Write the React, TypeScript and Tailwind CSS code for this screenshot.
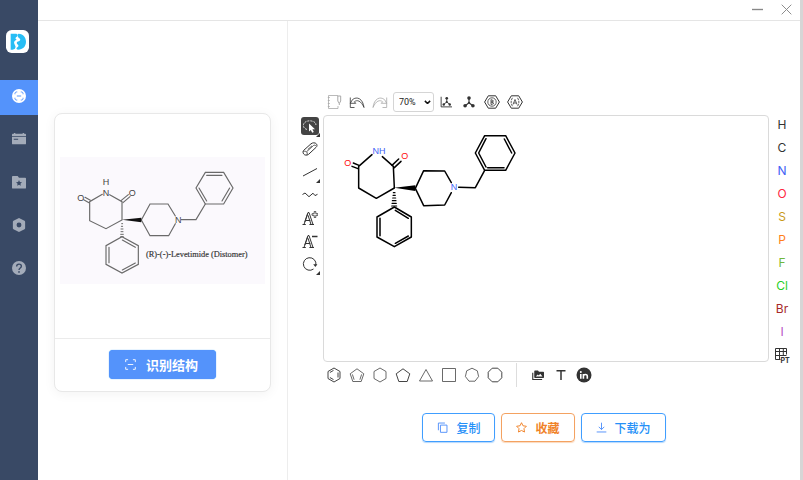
import { useState, type ReactNode } from "react";

const ATOMS = [
  { symbol: "H", color: "text-[#333333]" },
  { symbol: "C", color: "text-[#333333]" },
  { symbol: "N", color: "text-[#4262f5]" },
  { symbol: "O", color: "text-[#ff2640]" },
  { symbol: "S", color: "text-[#c99a19]" },
  { symbol: "P", color: "text-[#ff8019]" },
  { symbol: "F", color: "text-[#70b83c]" },
  { symbol: "Cl", color: "text-[#1fd01f]" },
  { symbol: "Br", color: "text-[#a62929]" },
  { symbol: "I", color: "text-[#b94cc4]" },
];

type IconProps = { children: ReactNode; size?: string; className?: string };

// 16x16 line icon, strokes follow the text colour
function Icon({ children, size = "size-4", className = "" }: IconProps) {
  return (
    <svg
      viewBox="0 0 16 16"
      className={`${size} ${className} shrink-0`}
      fill="none"
      stroke="currentColor"
      strokeWidth="0.8"
      aria-hidden="true"
    >
      {children}
    </svg>
  );
}

const NAV_ITEMS = [
  {
    label: "识别",
    icon: (
      <>
        <circle cx="8" cy="8" r="8" fill="#fff" stroke="none" />
        <path
          d="M3.4 6V5C3.4 4.1 4.1 3.4 5 3.4H6M10 3.4h1c.9 0 1.600.7 1.600 1.600v1M12.600 10v1c0 .9-.7 1.600-1.600 1.600h-1M6 12.600h-1c-.9 0-1.600-.7-1.600-1.600v-1M5.500 8h5"
          stroke="#5493fb"
          strokeWidth="1.100"
        />
      </>
    ),
  },
  {
    label: "记录",
    icon: (
      <g stroke="none" fill="currentColor">
        <path d="M2.200 1h1.600v1h8.400V1h1.600v1H15a1 1 0 0 1 1 1v1.800H0V3a1 1 0 0 1 1-1h1.200z" />
        <path d="M0 5.800h16v7.200a1 1 0 0 1-1 1H1a1 1 0 0 1-1-1zM2 7.600v1.200h5V7.600z" fillRule="evenodd" />
      </g>
    ),
  },
  {
    label: "收藏夹",
    icon: (
      <path
        d="M1 1h5.500l1.500 2h7a1 1 0 0 1 1 1v10.500a1 1 0 0 1-1 1H1a1 1 0 0 1-1-1V2a1 1 0 0 1 1-1zm7 4.800-1 2.200-2.400.3 1.800 1.600-.5 2.400L8 11.100l2.100 1.200-.5-2.400 1.800-1.600L9 8z"
        fill="currentColor"
        fillRule="evenodd"
        stroke="none"
      />
    ),
  },
  {
    label: "设置",
    icon: (
      <path
        d="M8 0l6.300 3.200c.5.300.7.700.7 1.200v7.200c0 .5-.2.900-.7 1.200L8 16l-6.300-3.200c-.5-.3-.7-.7-.7-1.200V4.400c0-.5.2-.9.700-1.200zM8 5.200a2.800 2.800 0 1 0 0 5.600 2.800 2.800 0 0 0 0-5.600z"
        fill="currentColor"
        fillRule="evenodd"
        stroke="none"
      />
    ),
  },
  {
    label: "帮助",
    icon: (
      <>
        <circle cx="8" cy="8" r="8" fill="currentColor" stroke="none" />
        <path d="M5.300 6.300C5.300 4.700 6.400 3.600 8 3.600s2.700 1 2.700 2.400c0 1.900-2.700 2-2.700 4.200" stroke="#394965" strokeWidth="1.600" />
        <circle cx="8" cy="12.500" r="1" fill="#394965" stroke="none" />
      </>
    ),
  },
];

const MORE_MARK = (
  <svg viewBox="0 0 4 4" className="absolute -right-px -bottom-[2px] size-1" aria-hidden="true">
    <path d="M4 0v4H0z" fill="#333" />
  </svg>
);

const LETTER_A = (
  <path d="M.5 14.500h3.300M7.400 14.500H12M2 14.500 6 2.500h1L11 14.500M9 14.500 6 5.200M3.300 10.500h5M2.800 12 5.700 3.500" strokeWidth="1" />
);

const TOOLS = [
  {
    label: "Eraser",
    icon: (
      <>
        <path d="M1.500 9.500 9 2.800c1.500-1.300 4.300-1.300 5.300 0 1 1.200.9 2.500-.3 3.600l-7.500 7c-1.300 1.100-3.900 1-4.800-.4-.7-1.100-1-2.400-.2-3.500z" strokeWidth="1" />
        <path d="M4.500 10.800 11.500 4.500c.7-.6 2-.3 2.500.4M4.500 10.800c-1.400-.8-2.400-.8-3.200-.2M4.500 10.800c.8.600 1 1.600.5 3.200M5.800 8.500 10 4.800" />
      </>
    ),
  },
  { label: "Bond", more: true, icon: <path d="M1 12 15 4.500" strokeWidth="1" /> },
  { label: "Chain", icon: <path d="M.5 7.500 3 6l4 3.700L11 6.200l2 2.400 2.500-1.300" strokeWidth="1" /> },
  {
    label: "Charge Plus",
    icon: (
      <>
        {LETTER_A}
        <path d="M12.200 1.500h1.600v2.200H16v1.600h-2.200v2.200h-1.600V5.300H10V3.700h2.200z" />
      </>
    ),
  },
  {
    label: "Charge Minus",
    icon: (
      <>
        {LETTER_A}
        <path d="M10 3.500h5.500" strokeWidth="1.500" />
      </>
    ),
  },
  {
    label: "Rotate",
    more: true,
    icon: (
      <>
        <path d="M11.500 13A6.300 6.300 0 1 1 13.900 9" strokeWidth="1" />
        <path d="M11.200 8.200h4.200L13.400 11z" fill="currentColor" stroke="none" />
      </>
    ),
  },
];

const TEMPLATES = [
  {
    label: "Benzene",
    icon: <path d="M8 1l6 3.500v7L8 15l-6-3.500v-7zM7.500 3.400 3.900 5.500M3.900 10.500l3.600 2.100M12 5.500v5" strokeWidth="1" />,
  },
  {
    label: "Cyclopentadiene",
    icon: <path d="M8 1.800l6.800 5L12.200 14.500H3.800L1.200 6.800zM3.400 7.400l1.700 5.300M12.600 7.400l-1.700 5.300" />,
  },
  { label: "Cyclohexane", icon: <path d="M8 1l6 3.500v7L8 15l-6-3.500v-7z" /> },
  { label: "Cyclopentane", icon: <path d="M8 1.800l6.800 5L12.200 14.500H3.800L1.200 6.800z" strokeWidth="1" /> },
  { label: "Cyclopropane", icon: <path d="M8 2.500 14.500 14H1.500z" /> },
  { label: "Cyclobutane", icon: <path d="M1.500 1.500h13v13h-13z" /> },
  { label: "Cycloheptane", icon: <path d="M8 1.200l5.300 2.600 1.300 5.700-3.600 4.700H5L1.400 9.500l1.300-5.700z" /> },
  { label: "Cyclooctane", icon: <path d="M5.200 1.200h5.600l4 4v5.600l-4 4H5.200l-4-4V5.200z" strokeWidth="1" /> },
];

const HEXAGON = <path d="M4.300 1.800h7.400L15.400 8l-3.700 6.200H4.300L.6 8z" strokeWidth="1" />;

function ToolButton({ label, disabled, children }: { label: string; disabled?: boolean; children: ReactNode }) {
  return (
    <button
      type="button"
      aria-label={label}
      disabled={disabled}
      className="flex w-[22px] items-center justify-center text-[#333333] disabled:text-[#a8a8a8]"
    >
      {children}
    </button>
  );
}

function Sidebar() {
  return (
    <nav className="flex w-[38px] shrink-0 flex-col bg-[#394965]">
      <div className="flex h-20 items-center justify-center pt-[3px] pr-[3px]">
        <svg viewBox="0 0 69 69" className="size-[23px]" role="img" aria-label="logo">
          <rect width="69" height="69" rx="17" fill="#fff" />
          <path d="M14 11h15c7 0 7 7 2 10-4 3-3 6 1 8-7 2-9 7-7 12 2 6 5 7 3 12-1 4-5 6-14 6z" fill="#27bdf5" />
          <path d="M38 11c14 1 22 11 22 24S51 59 36 59c-6 0-6-6-1-8 5-3 1-7-2-9-2-5 1-8 6-8 5-2 5-7 1-9-5-4-8-13-2-14z" fill="#27bdf5" />
        </svg>
      </div>
      <div className="flex flex-col gap-2">
        {NAV_ITEMS.map((item, idx) => (
          <a
            key={item.label}
            href="#"
            aria-label={item.label}
            className={
              idx === 0
                ? "flex h-[35px] items-center justify-center bg-[#5493fb] pb-[3px] text-white"
                : "flex h-[35px] items-center justify-center pb-[3px] text-[#a3abb9]"
            }
          >
            <Icon size="size-[14px]">{item.icon}</Icon>
          </a>
        ))}
      </div>
    </nav>
  );
}

function SourceImage() {
  return (
    <svg viewBox="30 155 615 382" className="w-full bg-[#fbf9fd]" role="img" aria-label="Levetimide">
      <g fill="none" stroke="#6a6a6a" strokeWidth="3.500" strokeLinecap="round">
        <path d="M157 267 119 289V346L168 370 216 344V289L179 268" />
        <path d="M117 292 101 283M121 285 105 276M213 286 235 268M219 292 240 274" />
        <path d="M274 344 300 296H354L376 332M376 355 356 391H300L274 344M394 343H438L466 296" />
        <path d="M466 296 438 248 466 201H521L549 248 521 296zM470 287 447 248M470 210H516M539 248 516 287" />
        <path d="M216 394 265 421V477L216 503 168 477V421zM217 404 256 426M256 473 217 494M177 426V472" />
        <path d="M212 394h8M212 387h8M213 379h6M213 371h6M214 363h4M215 355h3" strokeWidth="3" />
      </g>
      <path d="M216 343 274 337V351z" fill="#111" />
      <g fill="#444" fontSize="27" textAnchor="middle" className="font-['Liberation_Sans']">
        <text x="168" y="239">H</text>
        <text x="168" y="271">N</text>
        <text x="92" y="287">O</text>
        <text x="247" y="271">O</text>
        <text x="385" y="353">N</text>
      </g>
      <text x="288" y="455" fontSize="25" fill="#333" stroke="#333" strokeWidth="0.500" className="font-['Liberation_Serif']">
        (R)-(-)-Levetimide (Distomer)
      </text>
    </svg>
  );
}

function Molecule() {
  return (
    <svg viewBox="0 0 600 405" className="w-[200px]" role="img" aria-label="structure">
      <g fill="none" stroke="#000" strokeWidth="4.500" strokeLinecap="round" strokeLinejoin="round">
        <path d="M126 104 86 139V204L139 235 193 204 190 139 157 110" />
        <path d="M84 146 66 139M87 136 70 129M186 136 206 117M193 143 213 124" />
        <path d="M256 205 281 152 344 153 364 188M364 218 344 255 281 257 256 205M386 202 436 203 464 151" />
        <path d="M464 151 436 99 464 47 527 47 555 99 527 151zM468 141 446 99 468 56M523 57 545 99M473 143H522" />
        <path d="M193 261 244 291V351L193 380 141 351V291zM196 271 235 295M235 348 196 370M150 295V347" />
        <path d="M185 258H200M186 250H199M187 242H198M188 234H197M189 226H196M190 218H195" strokeWidth="3.500" />
      </g>
      <path d="M193 203 256 196V213z" />
      <g fontSize="27" textAnchor="middle" className="font-['Liberation_Sans']">
        <text x="147" y="102" fill="#4262f5">NH</text>
        <text x="53" y="138" fill="#ff0d0d">O</text>
        <text x="224" y="116" fill="#ff0d0d">O</text>
        <text x="372" y="211" fill="#4262f5">N</text>
      </g>
    </svg>
  );
}

function SourcePanel() {
  return (
    <section className="w-[250px] shrink-0 border-r border-[#ededed] px-4 pt-[92px]">
      <div className="rounded-lg border border-[#e8e8e8] bg-white shadow-[0_2px_12px_rgba(0,0,0,0.05)]">
        <div className="px-[5px] pt-[43px] pb-[54px]">
          <SourceImage />
        </div>
        <div className="flex justify-center border-t border-[#ebebeb] pt-[11px] pb-3">
          <button
            type="button"
            className="flex h-[29px] items-center gap-[10px] rounded bg-[#5493fb] pr-[18px] pl-4 text-[13px] font-bold text-white shadow-[0_0_1px_#1890ff]"
          >
            <Icon size="size-[11px]">
              <path d="M1 4.500V1h3.500M11.500 1H15v3.500M15 11.500V15h-3.500M4.500 15H1v-3.500M4 8h8" strokeWidth="1.300" />
            </Icon>
            识别结构
          </button>
        </div>
      </div>
    </section>
  );
}

function EditorToolbar() {
  const [zoom, setZoom] = useState("70%");

  return (
    <div className="flex h-5 gap-px">
      <ToolButton label="Clear Canvas" disabled>
        <Icon>
          <path d="M12 1.500H2.500v13H12M12 12v2.500" />
          <path d="M1.800 3.500h2M1.800 6.500h2M1.800 9.500h2M1.800 12.500h2" />
          <path d="M11.800 2h2.900v5l-1.400 2.500-1.500-2.500zM13.300 9.500v1.500" strokeWidth="1" />
        </Icon>
      </ToolButton>
      <ToolButton label="Undo">
        <Icon>
          <path d="M1.300 3.500V13.500h4.200M1.300 9.300H6.800L5.300 7.800C8 5.500 12 6.500 15 13.500 14 4.800 8 1.800 3.400 5.700z" />
        </Icon>
      </ToolButton>
      <ToolButton label="Redo" disabled>
        <Icon>
          <path d="M14.700 3.500V13.500h-4.200M14.700 9.300H9.200l1.500-1.500C8 5.500 4 6.500 1 13.500 2 4.800 8 1.800 12.600 5.700z" />
        </Icon>
      </ToolButton>
      <div className="relative ml-px w-[41px]">
        <select
          aria-label="Zoom"
          value={zoom}
          onChange={(e) => setZoom(e.target.value)}
          className="block h-5 w-full appearance-none rounded-[3px] border border-[#d5d5d5] bg-white pl-[5px] font-['Roboto'] text-[9px] leading-none text-[#222222]"
        >
          <option>50%</option>
          <option>70%</option>
          <option>100%</option>
        </select>
        <svg viewBox="0 0 8 5" className="pointer-events-none absolute top-2 right-[3px] w-[7px]" aria-hidden="true">
          <path d="M1 1l3 3 3-3" fill="none" stroke="#111" strokeWidth="1.700" />
        </svg>
      </div>
      <ToolButton label="Layout">
        <Icon size="size-3">
          <path d="M1.500 1v13.500H16" strokeWidth="1.200" />
          <path d="M9 3.500V8l-4.500 3.500M9 8l4.500 3.500" strokeWidth="1.200" />
          <g fill="currentColor" stroke="none">
            <circle cx="9" cy="3" r="1.800" />
            <circle cx="5" cy="11.300" r="1.600" />
            <circle cx="13" cy="11.300" r="1.600" />
            <circle cx="9" cy="8" r="1.400" />
          </g>
        </Icon>
      </ToolButton>
      <ToolButton label="Clean Up">
        <Icon size="size-3">
          <path d="M8 3v6L3 13M8 9l5 4" strokeWidth="1.500" />
          <g fill="currentColor" stroke="none">
            <circle cx="8" cy="2.800" r="2.400" />
            <circle cx="2.800" cy="13" r="2.400" />
            <circle cx="13.200" cy="13" r="2.400" />
            <circle cx="8" cy="9" r="1.500" />
          </g>
        </Icon>
      </ToolButton>
      <ToolButton label="Aromatize">
        <Icon>
          {HEXAGON}
          <circle cx="8" cy="8" r="4.200" />
          <path d="M7 5.500v5M7 5.700l2.200.8v1L7.200 8l2.200.8v1L7 10.500" />
        </Icon>
      </ToolButton>
      <ToolButton label="Calculate CIP">
        <Icon>
          {HEXAGON}
          <path d="M5.500 3.800Q2.800 8 5.500 12.200M10.500 3.800q2.700 4.200 0 8.400" strokeDasharray="2.500 .8" />
          <path d="M6 10.500 8 5.500l2 5M6.800 9h2.400" />
        </Icon>
      </ToolButton>
    </div>
  );
}

function TemplateBar() {
  return (
    <div className="mt-px flex h-6 gap-px text-[#333333]">
      {TEMPLATES.map((tpl) => (
        <ToolButton key={tpl.label} label={tpl.label}>
          <Icon className="text-[#444444]">{tpl.icon}</Icon>
        </ToolButton>
      ))}
      <div className="mx-[9px] w-px bg-[#dddddd]" />
      <ToolButton label="Template Library">
        <Icon size="size-3">
          <path d="M4 2h4l1.300 1.500H15a1 1 0 0 1 1 1V11a1 1 0 0 1-1 1H4a1 1 0 0 1-1-1V3a1 1 0 0 1 1-1zM5 10h9l-3-3.800-2 2.400-1.300-1.400z" fill="currentColor" fillRule="evenodd" stroke="none" />
          <path d="M1 5v9h12.500" strokeWidth="1.500" />
        </Icon>
      </ToolButton>
      <ToolButton label="Text">
        <Icon size="size-3">
          <path d="M2 2.200h12M8 2.200V14.500" strokeWidth="2" />
        </Icon>
      </ToolButton>
      <ToolButton label="LinkedIn">
        <Icon>
          <circle cx="8" cy="8" r="7.500" fill="currentColor" stroke="none" />
          <path d="M4.800 7v4.800M7.400 11.800V7M7.400 9.200c0-2.200 3.900-2.500 3.900 0v2.600" stroke="#fff" strokeWidth="1.600" />
          <circle cx="4.800" cy="4.900" r="1" fill="#fff" stroke="none" />
        </Icon>
      </ToolButton>
    </div>
  );
}

function Editor() {
  return (
    <div className="grid grid-cols-[25px_1fr_26px]">
      <div className="flex flex-col items-center gap-[5px] pt-[25px] pr-px">
        <button
          type="button"
          aria-label="Select"
          className="relative flex size-[18px] items-center justify-center rounded-[3px] bg-[#444444] text-white"
        >
          <Icon>
            <path d="M5 11.500C2.500 10.800 1 9 1.500 6.500 2.200 3.600 6 2.300 9.500 3c3 .6 4.800 2 4.300 4" strokeDasharray="2 1" />
            <path d="M7 5.500v8l1.800-1.500 1.400 2.800 1.600-.8-1.400-2.700H13z" fill="currentColor" stroke="none" />
          </Icon>
          {MORE_MARK}
        </button>
        {TOOLS.map((tool) => (
          <button
            key={tool.label}
            type="button"
            aria-label={tool.label}
            className="relative flex size-[18px] items-center justify-center text-[#333333]"
          >
            <Icon>{tool.icon}</Icon>
            {tool.more && MORE_MARK}
          </button>
        ))}
      </div>

      <div>
        <EditorToolbar />
        <div className="mt-[3px] min-h-[247px] rounded border border-[#dadada] bg-white px-[6px] py-1">
          <Molecule />
        </div>
        <TemplateBar />
      </div>

      <div className="flex flex-col gap-[3px] pt-[23px] font-['Inter'] text-xs">
        {ATOMS.map((atom) => (
          <button key={atom.symbol} type="button" className={`h-5 ${atom.color}`}>
            {atom.symbol}
          </button>
        ))}
        <button type="button" aria-label="Periodic Table" className="flex h-5 items-center justify-center text-[#333333]">
          <Icon>
            <path d="M1.500 1.500h11v6M1.500 1.500v11h5M1.500 4.500h11M1.500 8.500h11M5.500 1.500v11M9.300 1.500v7" strokeWidth="1" />
            <text x="6.500" y="15.500" fontSize="7" fontWeight="700" fill="currentColor" stroke="none">
              PT
            </text>
          </Icon>
        </button>
      </div>
    </div>
  );
}

function Actions() {
  return (
    <div className="mt-[26px] flex justify-center gap-[6px] pr-[5px] text-xs font-medium">
      <button type="button" className="flex h-[29px] items-center gap-2 rounded border border-[#409eff] px-[14px] text-[#2590f8] shadow-[0_1px_1px_#b5d8fc]">
        <Icon size="size-[11px]" className="text-[#5493fb]">
          <path d="M5 4.500h9.500v10.500H5zM2 12V1.500h9.500" strokeWidth="1.400" strokeLinejoin="round" />
        </Icon>
        复制
      </button>
      <button type="button" className="flex h-[29px] items-center gap-2 rounded border border-[#f4a261] px-[14px] font-bold text-[#f08228] shadow-[0_1px_1px_#fbd9bd]">
        <Icon size="size-[11px]">
          <path d="M8 1l2.200 4.500 4.900.7-3.500 3.500.8 4.900L8 12.300l-4.400 2.300.8-4.900L.9 6.200l4.900-.7z" strokeWidth="1.400" strokeLinejoin="round" />
        </Icon>
        收藏
      </button>
      <button type="button" className="flex h-[29px] items-center gap-2 rounded border border-[#409eff] px-[14px] text-[#2590f8] shadow-[0_1px_1px_#b5d8fc]">
        <Icon size="size-[11px]" className="text-[#5493fb]">
          <path d="M8 1v10M4 7l4 4 4-4M1 14.500h14" strokeWidth="1.400" />
        </Icon>
        下载为
      </button>
    </div>
  );
}

export default function App() {
  return (
    <div className="flex min-h-screen border-r-3 border-[#d6d6d6] bg-white font-['Noto_Sans_CJK_SC',sans-serif]">
      <Sidebar />
      <div className="flex min-w-0 flex-1 flex-col">
        <header className="flex h-[21px] items-center justify-end gap-[18px] border-b border-[#e5e5e5] pr-2 pb-px text-[#888888]">
          <button type="button" aria-label="最小化">
            <Icon size="size-[11px]">
              <path d="M0 8h16" strokeWidth="2" />
            </Icon>
          </button>
          <button type="button" aria-label="关闭">
            <Icon size="size-[11px]">
              <path d="M1 1l14 14M15 1 1 15" strokeWidth="1.400" />
            </Icon>
          </button>
        </header>
        <main className="flex flex-1">
          <SourcePanel />
          <section className="min-w-0 flex-1 pt-[71px] pr-[5px] pl-[10px]">
            <Editor />
            <Actions />
          </section>
        </main>
      </div>
    </div>
  );
}
